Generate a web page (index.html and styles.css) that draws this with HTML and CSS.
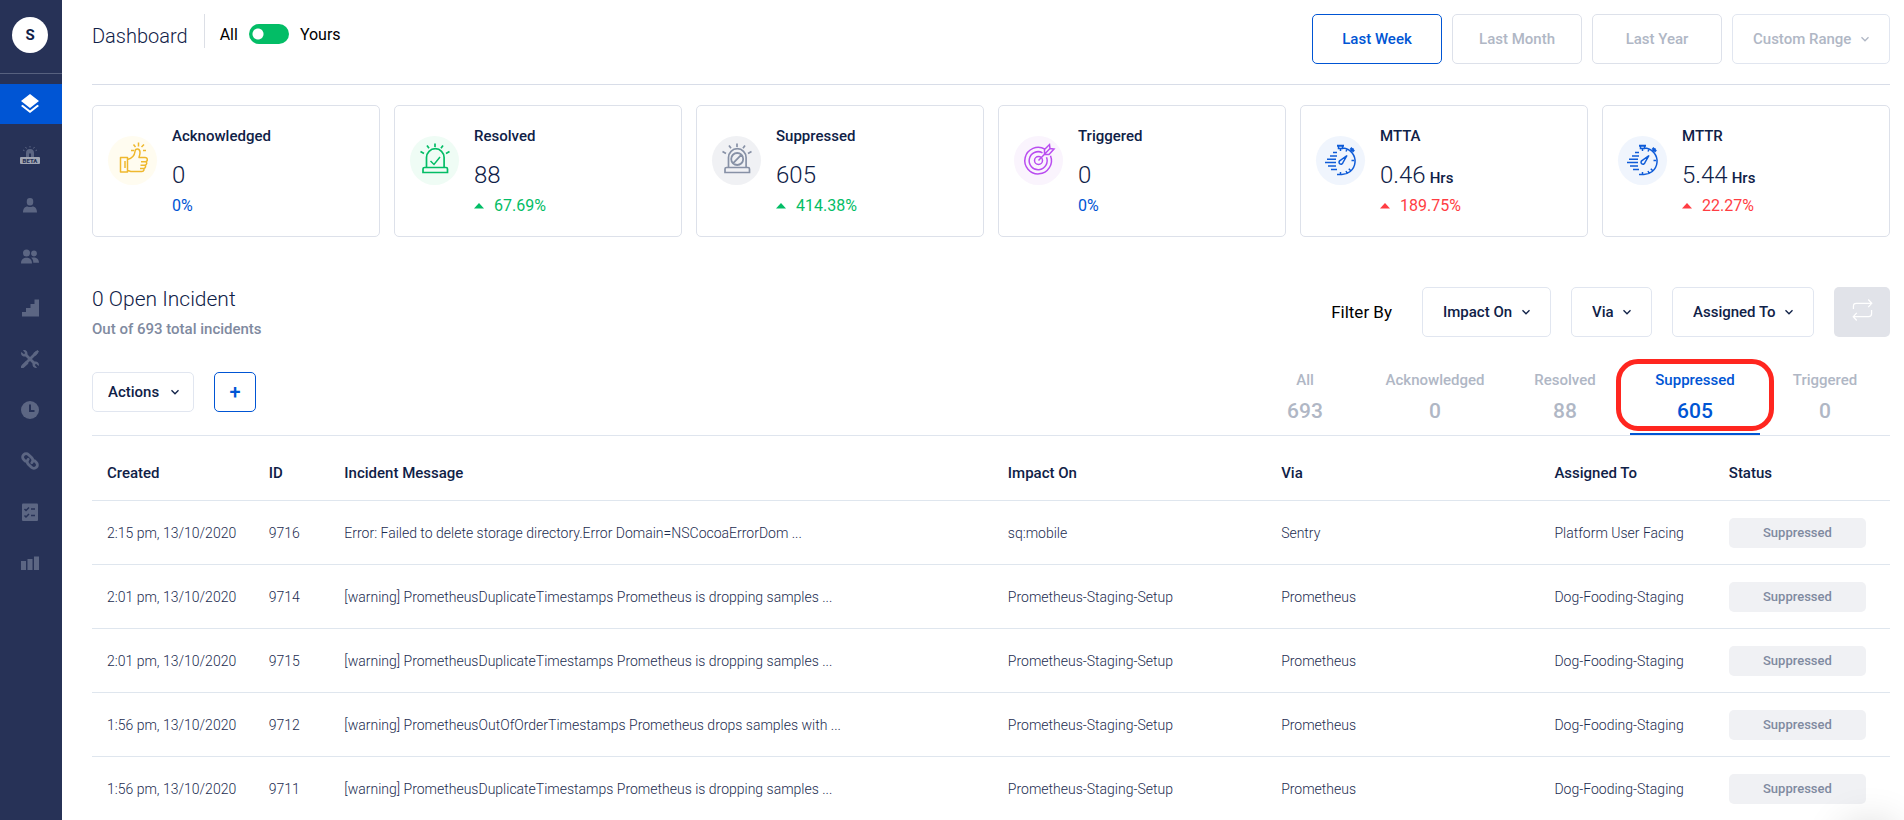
FILE: index.html
```html
<!DOCTYPE html>
<html lang="en">

<head>
    <meta charset="UTF-8">
    <meta name="viewport" content="width=device-width, initial-scale=1.0">
    <title>Dashboard</title>
    <link rel="stylesheet" href="styles.css">
</head>

<body>
    <!-- Shared icons -->
    <svg class="sprite" width="0" height="0" aria-hidden="true">
        <symbol id="chevron" viewBox="0 0 10 10">
            <path d="M1.500 3.200 5 6.800 8.500 3.200" fill="none" stroke="currentColor" stroke-width="1.300" />
        </symbol>
        <symbol id="caret" viewBox="0 0 10 6">
            <path d="M5 0 10 5.500H0z" fill="currentColor" />
        </symbol>
        <symbol id="siren" viewBox="0 0 49 49">
            <path d="M16.500 31.500V21.500a8.800 8.800 0 0 1 17.600 0v10M14.500 31.500h21.500q1.500 0 1.500 1.500v3.500h-24.500v-3.500q0-1.500 1.500-1.500zM25 7.500v3.500M17 9.500l2 2.700M33 9.500l-2 2.700M10.500 15.500l3.500 2M39.500 15.500l-3.500 2" fill="none" stroke="currentColor" stroke-width="1.700" />
        </symbol>
        <symbol id="stopwatch" viewBox="0 0 49 49">
            <g fill="none" stroke="currentColor" stroke-width="1.500">
                <path d="M21 9.800h7" stroke-width="2" />
                <path d="M22.500 10v2.500h4V10M24.500 12v3M27 12a13.300 13.300 0 0 1-2.500 26.500M24.500 38.500H21M35 15l2.500-2.500M38 24.500h-2.500M24.500 38.500V36M34.500 34.500l-1.700-1.700M31 13.500l-1 2M31 37l-1-2" />
                <path d="M34.500 12l3.500 3.500" stroke-width="2.500" />
                <path d="M31 19.500l-4 7a2 2 0 1 1-3-2z" />
                <path d="M17 16.500h4M14 20h7M11 23.300h9M9 26.600h11M12 30h8M15 33.400h6" />
            </g>
        </symbol>
    </svg>

    <div class="app">
        <!-- Sidebar -->
        <nav class="sidebar" aria-label="Main">
            <div class="profile">
                <a class="avatar" href="#">S</a>
            </div>
            <div class="menu">
                <a class="menu-item active" href="#" aria-label="Dashboard">
                    <svg viewBox="0 0 24 24"><path d="M12 18.500l-7.400-5.700L3 14l9 7 9-7-1.600-1.200zM12 16l9-7-9-7-9 7z" /></svg>
                </a>
                <a class="menu-item" href="#" aria-label="Incidents beta">
                    <svg viewBox="0 0 24 24">
                        <path d="M8 14.500V10a4 4 0 0 1 8 0v4.500h-3v-4h-2v4z" />
                        <path d="M12 3v1.500M7.500 4l1 1.500M16.500 4l-1 1.500M5 7l1.500.7M19 7l-1.500.7" fill="none" stroke="currentColor" />
                        <rect class="beta-box" x="2" y="14" width="20" height="7" rx="1" />
                        <text class="beta-text" x="12" y="19.800" text-anchor="middle">BETA</text>
                    </svg>
                </a>
                <a class="menu-item" href="#" aria-label="Users">
                    <svg viewBox="0 0 24 24"><rect x="8.800" y="4" width="6.400" height="7.500" rx="3" /><path d="M5 18.500c0-4 2-6 4.500-6q2.500 1.200 5 0c2.500 0 4.500 2 4.500 6z" /></svg>
                </a>
                <a class="menu-item" href="#" aria-label="Squads">
                    <svg viewBox="0 0 24 24"><circle cx="8.500" cy="8" r="3.500" /><circle cx="16" cy="8.500" r="2.900" /><path d="M3 18.500c0-4 2.500-5.700 5.500-5.700s5.500 1.700 5.500 5.700zM13 12.800c4-1.200 8 .2 8 5h-5.700c0-2.500-.8-4-2.300-5z" /></svg>
                </a>
                <a class="menu-item" href="#" aria-label="Escalation policies">
                    <svg viewBox="0 0 24 24"><path d="M4 20.500v-4.500h4v-4h4.500V8h4V3.500H21v17z" /></svg>
                </a>
                <a class="menu-item" href="#" aria-label="Services">
                    <svg viewBox="0 0 24 24">
                        <path d="M5 19 19 5M7 7l10 10" fill="none" stroke="currentColor" stroke-width="2.800" />
                        <path d="M3 19l5-5 2.500 2.500L5.500 21H3zM15.500 6l4-3L21 4.500 18 8.500l-2 .5zM3.300 5l2.700 2.200L7.200 6 5 3.300C7.500 2.300 10 4.500 9.500 7.500L7.500 9.500C4.500 10 2.300 7.500 3.300 5zM20.700 19 18 16.800 16.800 18l2.200 2.700c-2.500 1-5-1.200-4.500-4.200l2-2c3-.5 5.200 2 4.200 4.500z" />
                    </svg>
                </a>
                <a class="menu-item" href="#" aria-label="Schedules">
                    <svg viewBox="0 0 24 24"><circle cx="12" cy="12" r="9" /><path class="cut" d="M12 6.500V13h4.500" /></svg>
                </a>
                <a class="menu-item" href="#" aria-label="Integrations">
                    <svg viewBox="0 0 24 24"><g fill="none" stroke="currentColor" stroke-width="2.800" stroke-linecap="round" transform="rotate(45 12 12)"><path d="M9 15.500H6.500a3.500 3.500 0 0 1 0-7H11a3.500 3.500 0 0 1 3.500 3.500M15 8.500h2.500a3.500 3.500 0 0 1 0 7H13A3.500 3.500 0 0 1 9.500 12" /></g></svg>
                </a>
                <a class="menu-item" href="#" aria-label="Postmortems">
                    <svg viewBox="0 0 24 24"><rect x="4" y="3.500" width="16" height="17.500" rx="1" /><path class="cut thin" d="M6.500 9l1.500 1.500 3-3M13 9h4M6.500 15.500 8 17l3-3M13 15.500h4" /></svg>
                </a>
                <a class="menu-item" href="#" aria-label="Analytics">
                    <svg viewBox="0 0 24 24"><path d="M3 10h5v9H3zM9.500 8h5v11h-5zM16 5.500h5V19h-5z" /></svg>
                </a>
            </div>
        </nav>

        <main class="content">
            <!-- Page header -->
            <header class="page-header">
                <h1 class="page-title">Dashboard</h1>
                <div class="owner-switch">
                    <label for="owner">All</label>
                    <input type="checkbox" id="owner" class="switch">
                    <label for="owner">Yours</label>
                </div>
                <div class="ranges">
                    <button type="button" class="btn range selected">Last Week</button>
                    <button type="button" class="btn range">Last Month</button>
                    <button type="button" class="btn range">Last Year</button>
                    <div class="dropdown muted">
                        <select aria-label="Custom range"><option>Custom Range</option></select>
                        <svg><use href="#chevron" /></svg>
                    </div>
                </div>
            </header>

            <!-- Summary cards -->
            <section class="cards">
                <article class="card">
                    <svg class="card-icon yellow" viewBox="0 0 49 49">
                        <g fill="none" stroke="currentColor" stroke-width="1.500" stroke-linejoin="round">
                            <path d="M12.500 21.500h7v14.500h-7zM17 25v7M19.500 23.500c4-1 7-3.500 7.500-8 .2-3.500 4.800-3.500 5 .5.200 2-.5 4-1 5.500h6c3 0 3 4 .5 4.200 2 .5 1.500 3.500-1 3.600 2 .5 1 3.200-1 3.200 1 .8.500 3-1.500 3H24c-2 0-3-1-4.500-1M33 25.700h4M32.500 29.300h4M32 32.500h3.500" />
                            <path d="M30.500 6.500v4M25.500 8.500l2 2.500M36 8.500l-2.500 2.500M23 14.500h3M35 14.500h3" />
                        </g>
                    </svg>
                    <div class="card-body">
                        <h2>Acknowledged</h2>
                        <p class="value">0</p>
                        <p class="change flat">0%</p>
                    </div>
                </article>
                <article class="card">
                    <svg class="card-icon green" viewBox="0 0 49 49">
                        <use href="#siren" />
                        <path d="M20.500 25l3.500 3.500 6-7.500" fill="none" stroke="currentColor" stroke-width="1.500" />
                    </svg>
                    <div class="card-body">
                        <h2>Resolved</h2>
                        <p class="value">88</p>
                        <p class="change up"><svg><use href="#caret" /></svg>67.69%</p>
                    </div>
                </article>
                <article class="card">
                    <svg class="card-icon grey" viewBox="0 0 49 49">
                        <use href="#siren" />
                        <path d="M25.200 17a6 6 0 1 1 0 12 6 6 0 1 1 0-12zM29.200 18.800l-8 8.400" fill="none" stroke="currentColor" stroke-width="1.800" />
                    </svg>
                    <div class="card-body">
                        <h2>Suppressed</h2>
                        <p class="value">605</p>
                        <p class="change up"><svg><use href="#caret" /></svg>414.38%</p>
                    </div>
                </article>
                <article class="card">
                    <svg class="card-icon purple" viewBox="0 0 49 49">
                        <g fill="none" stroke="currentColor" stroke-width="1.500">
                            <path d="M31 13.200a13.300 13.300 0 1 0 5.500 6.500M28.500 16.800a9 9 0 1 0 4 4.500" />
                            <circle cx="24.500" cy="24.500" r="4" />
                            <path d="M24.500 24.500 36 12.500M30.500 18.500v-5l5-5 .5 4 4 .5-5 5.500z" />
                        </g>
                    </svg>
                    <div class="card-body">
                        <h2>Triggered</h2>
                        <p class="value">0</p>
                        <p class="change flat">0%</p>
                    </div>
                </article>
                <article class="card">
                    <svg class="card-icon blue" viewBox="0 0 49 49"><use href="#stopwatch" /></svg>
                    <div class="card-body">
                        <h2>MTTA</h2>
                        <p class="value">0.46<span>Hrs</span></p>
                        <p class="change down"><svg><use href="#caret" /></svg>189.75%</p>
                    </div>
                </article>
                <article class="card">
                    <svg class="card-icon blue" viewBox="0 0 49 49"><use href="#stopwatch" /></svg>
                    <div class="card-body">
                        <h2>MTTR</h2>
                        <p class="value">5.44<span>Hrs</span></p>
                        <p class="change down"><svg><use href="#caret" /></svg>22.27%</p>
                    </div>
                </article>
            </section>

            <!-- Incident summary and filters -->
            <section class="summary">
                <div>
                    <h2 class="open-count">0 Open Incident</h2>
                    <p class="total">Out of 693 total incidents</p>
                </div>
                <div class="filters">
                    <span class="filter-label">Filter By</span>
                    <div class="dropdown">
                        <select aria-label="Impact on"><option>Impact On</option></select>
                        <svg><use href="#chevron" /></svg>
                    </div>
                    <div class="dropdown">
                        <select aria-label="Via"><option>Via</option></select>
                        <svg><use href="#chevron" /></svg>
                    </div>
                    <div class="dropdown">
                        <select aria-label="Assigned to"><option>Assigned To</option></select>
                        <svg><use href="#chevron" /></svg>
                    </div>
                    <button type="button" class="refresh" aria-label="Refresh">
                        <svg viewBox="0 0 22 24"><path d="M1.500 11V8q0-3 3-3h16M17 1l3.700 4L17 9M20.500 12v4q0 3-3 3h-16M5 15l-3.700 4L5 23" /></svg>
                    </button>
                </div>
            </section>

            <!-- Actions and status tabs -->
            <section class="toolbar">
                <div class="dropdown small">
                    <select aria-label="Actions"><option>Actions</option></select>
                    <svg><use href="#chevron" /></svg>
                </div>
                <button type="button" class="btn add" aria-label="Add incident">+</button>
                <div class="tabs">
                    <button type="button" class="tab">All<strong>693</strong></button>
                    <button type="button" class="tab">Acknowledged<strong>0</strong></button>
                    <button type="button" class="tab">Resolved<strong>88</strong></button>
                    <button type="button" class="tab current">Suppressed<strong>605</strong></button>
                    <button type="button" class="tab">Triggered<strong>0</strong></button>
                </div>
            </section>

            <!-- Incident table -->
            <table class="incidents">
                <thead>
                    <tr>
                        <th class="col-created">Created</th>
                        <th class="col-id">ID</th>
                        <th>Incident Message</th>
                        <th class="col-wide">Impact On</th>
                        <th class="col-wide">Via</th>
                        <th class="col-assigned">Assigned To</th>
                        <th class="col-status">Status</th>
                    </tr>
                </thead>
                <tbody>
                    <tr>
                        <td>2:15 pm, 13/10/2020</td>
                        <td>9716</td>
                        <td>Error: Failed to delete storage directory.Error Domain=NSCocoaErrorDom ...</td>
                        <td>sq:mobile</td>
                        <td>Sentry</td>
                        <td>Platform User Facing</td>
                        <td><span class="status">Suppressed</span></td>
                    </tr>
                    <tr>
                        <td>2:01 pm, 13/10/2020</td>
                        <td>9714</td>
                        <td>[warning] PrometheusDuplicateTimestamps Prometheus is dropping samples ...</td>
                        <td>Prometheus-Staging-Setup</td>
                        <td>Prometheus</td>
                        <td>Dog-Fooding-Staging</td>
                        <td><span class="status">Suppressed</span></td>
                    </tr>
                    <tr>
                        <td>2:01 pm, 13/10/2020</td>
                        <td>9715</td>
                        <td>[warning] PrometheusDuplicateTimestamps Prometheus is dropping samples ...</td>
                        <td>Prometheus-Staging-Setup</td>
                        <td>Prometheus</td>
                        <td>Dog-Fooding-Staging</td>
                        <td><span class="status">Suppressed</span></td>
                    </tr>
                    <tr>
                        <td>1:56 pm, 13/10/2020</td>
                        <td>9712</td>
                        <td>[warning] PrometheusOutOfOrderTimestamps Prometheus drops samples with ...</td>
                        <td>Prometheus-Staging-Setup</td>
                        <td>Prometheus</td>
                        <td>Dog-Fooding-Staging</td>
                        <td><span class="status">Suppressed</span></td>
                    </tr>
                    <tr>
                        <td>1:56 pm, 13/10/2020</td>
                        <td>9711</td>
                        <td>[warning] PrometheusDuplicateTimestamps Prometheus is dropping samples ...</td>
                        <td>Prometheus-Staging-Setup</td>
                        <td>Prometheus</td>
                        <td>Dog-Fooding-Staging</td>
                        <td><span class="status">Suppressed</span></td>
                    </tr>
                </tbody>
            </table>
        </main>
    </div>

    <div class="corner-shadow"></div>
</body>

</html>
```

FILE: styles.css
```css
* {
    box-sizing: border-box;
}

/* General body styles */
body {
    margin: 0;
    font-family: Roboto, "Open Sans", sans-serif;
    font-size: 15px;
    color: #0f2147;
    background-color: #fff;
}

h1,
h2,
p {
    margin: 0;
}

button,
select {
    font-family: inherit;
    font-size: 15px;
    font-weight: 500;
    color: inherit;
    cursor: pointer;
}

.sprite {
    position: absolute;
}

.app {
    display: flex;
    min-height: 100vh;
}

/* Sidebar */
.sidebar {
    flex: none;
    width: 62px;
    background-color: #273257;
}

.profile {
    display: flex;
    height: 74px;
    padding: 17px 12px;
    border-bottom: 1px solid #57617f;
}

.avatar {
    width: 36px;
    height: 36px;
    border-radius: 50%;
    background-color: #fff;
    color: #0f2147;
    font-size: 15px;
    font-weight: 700;
    line-height: 36px;
    text-align: center;
    text-decoration: none;
}

.menu {
    display: flex;
    flex-direction: column;
    gap: 11px;
    padding-top: 10px;
}

.menu-item {
    display: flex;
    align-items: center;
    height: 40px;
    padding-left: 18px;
    color: #5c6683;
}

.menu-item.active {
    background-color: #0055d4;
    color: #fff;
}

.menu-item svg {
    width: 24px;
    height: 24px;
    fill: currentColor;
}

.cut {
    fill: none;
    stroke: #273257;
    stroke-width: 2;
}

.cut.thin {
    stroke-width: 1.5;
}

.beta-box {
    fill: #a0a5b3;
}

.beta-text {
    fill: #273257;
    font-size: 6px;
    font-weight: 900;
}

/* Main content */
.content {
    flex: 1;
    min-width: 0;
    padding: 0 14px 0 30px;
}

/* Page header */
.page-header {
    display: flex;
    align-items: flex-start;
    height: 85px;
    padding-top: 14px;
    border-bottom: 1px solid #d8dde8;
}

.page-title {
    height: 34px;
    padding-right: 16px;
    border-right: 1px solid #dcdfe6;
    font-size: 20px;
    font-weight: 300;
    line-height: 44px;
}

.owner-switch {
    display: flex;
    align-items: center;
    gap: 11px;
    height: 40px;
    padding-left: 15px;
    color: #000;
    font-size: 16px;
}

.switch {
    appearance: none;
    width: 40px;
    height: 20px;
    margin: 0;
    border-radius: 10px;
    background: radial-gradient(circle at 9px 10px, #fff 5px, #03bd66 6px);
    cursor: pointer;
}

.ranges {
    display: flex;
    gap: 10px;
    margin-left: auto;
}

.btn {
    border: 1px solid #dde1ea;
    border-radius: 5px;
    background-color: #fff;
}

.range {
    width: 130px;
    height: 50px;
    color: #b0b7c5;
}

.range.selected {
    border-color: #0055d4;
    color: #0055d4;
}

/* Drop-downs */
.dropdown {
    position: relative;
    height: 50px;
}

.dropdown select {
    appearance: none;
    height: 100%;
    padding: 0 37px 0 20px;
    border: 1px solid #e1e6f0;
    border-radius: 5px;
    background-color: #fff;
}

.dropdown svg {
    position: absolute;
    top: 50%;
    right: 20px;
    width: 10px;
    height: 10px;
    margin-top: -5px;
    pointer-events: none;
}

.dropdown.muted {
    color: #b0b7c5;
}

.dropdown.small {
    height: 40px;
}

.dropdown.small select {
    padding: 0 33px 0 15px;
}

.dropdown.small svg {
    right: 14px;
}

/* Summary cards */
.cards {
    display: grid;
    grid-template-columns: repeat(6, 1fr);
    gap: 14px;
    margin-top: 20px;
}

.card {
    display: flex;
    align-items: flex-start;
    gap: 15px;
    height: 132px;
    padding: 20px 15px;
    border: 1px solid #dde1ea;
    border-radius: 5px;
}

.card-icon {
    flex: none;
    width: 49px;
    height: 49px;
    margin-top: 10px;
    border-radius: 50%;
}

.card-icon.yellow {
    background-color: #fffcf0;
    color: #efb82e;
}

.card-icon.green {
    background-color: #effcf5;
    color: #03bd66;
}

.card-icon.grey {
    background-color: #f0f1f4;
    color: #8791a6;
}

.card-icon.purple {
    background-color: #faf4fd;
    color: #b94df0;
}

.card-icon.blue {
    background-color: #f0f5fd;
    color: #0f5cd8;
}

.card h2 {
    font-size: 15px;
    font-weight: 500;
    line-height: 20px;
}

.value {
    margin-top: 14px;
    font-size: 24px;
    font-weight: 300;
    line-height: 30px;
}

.value span {
    margin-left: 4px;
    font-size: 15px;
    font-weight: 500;
    line-height: 15px;
}

.change {
    margin-top: 6px;
    font-size: 16px;
    line-height: 20px;
}

.change svg {
    width: 10px;
    height: 6px;
    margin-right: 10px;
    vertical-align: 2px;
}

.flat {
    color: #0055d4;
}

.up {
    color: #03bd66;
}

.down {
    color: #ff3d43;
}

/* Incident summary */
.summary {
    display: flex;
    align-items: flex-start;
    justify-content: space-between;
    margin-top: 50px;
}

.open-count {
    font-size: 21px;
    font-weight: 300;
    line-height: 24px;
}

.total {
    margin-top: 8px;
    color: #7f8aa0;
    font-weight: 500;
    line-height: 20px;
}

.filters {
    display: flex;
    align-items: center;
    gap: 20px;
}

.filter-label {
    margin-right: 10px;
    color: #000;
    font-size: 17px;
}

.refresh {
    width: 56px;
    height: 50px;
    padding: 0;
    border: 0;
    border-radius: 5px;
    background-color: #e1e3e9;
}

.refresh svg {
    width: 21px;
    height: 24px;
    fill: none;
    stroke: #fff;
    stroke-width: 1.3;
}

/* Actions and tabs */
.toolbar {
    display: flex;
    align-items: center;
    gap: 20px;
    height: 87px;
    margin-top: 10px;
    border-bottom: 1px solid #dfe5ee;
}

.add {
    width: 42px;
    height: 40px;
    padding: 0;
    border-color: #0055d4;
    color: #0055d4;
    font-size: 20px;
}

.tabs {
    display: flex;
    align-self: flex-end;
    margin-left: auto;
}

.tab {
    position: relative;
    display: flex;
    flex-direction: column;
    align-items: center;
    justify-content: flex-start;
    gap: 9px;
    width: 130px;
    height: 66px;
    padding: 0;
    border: 0;
    border-bottom: 2px solid transparent;
    background: none;
    color: #b0b7c5;
    line-height: 22px;
}

.tab strong {
    font-size: 21px;
    font-weight: 500;
}

.tab.current {
    border-bottom-color: #0055d4;
    color: #0055d4;
}

/* Red highlight around the current tab */
.tab.current::after {
    content: "";
    position: absolute;
    inset: -10px -14px 2px;
    border: 5px solid #ff261f;
    border-radius: 22px;
}

/* Incident table */
.incidents {
    width: 100%;
    border-collapse: separate;
    border-spacing: 0;
    table-layout: fixed;
}

.incidents th,
.incidents td {
    height: 64px;
    padding: 0 15px;
    border-bottom: 1px solid #dfe6ee;
    text-align: left;
    white-space: nowrap;
}

.incidents th {
    height: 65px;
    padding-top: 10px;
    font-weight: 500;
}

.incidents td {
    color: #1c2c50;
    font-size: 14px;
    font-weight: 300;
}

.incidents tr:last-child td {
    border-bottom: 0;
}

.incidents .col-created {
    width: 9%;
}

.incidents .col-id {
    width: 4.2%;
}

.incidents .col-wide {
    width: 15.2%;
}

.incidents .col-assigned {
    width: 9.7%;
}

.incidents .col-status {
    width: 9.8%;
}

.incidents td:last-child {
    padding-right: 24px;
}

.status {
    display: block;
    border-radius: 5px;
    background-color: #f0f1f4;
    color: #7f8aa0;
    font-size: 13px;
    font-weight: 500;
    line-height: 30px;
    text-align: center;
}

/* Soft shadow of the widget tucked under the window's corner */
.corner-shadow {
    position: fixed;
    right: 4px;
    bottom: -62px;
    width: 60px;
    height: 60px;
    border-radius: 50%;
    box-shadow: 0 0 40px rgba(0, 0, 0, 0.16);
    pointer-events: none;
}
```
